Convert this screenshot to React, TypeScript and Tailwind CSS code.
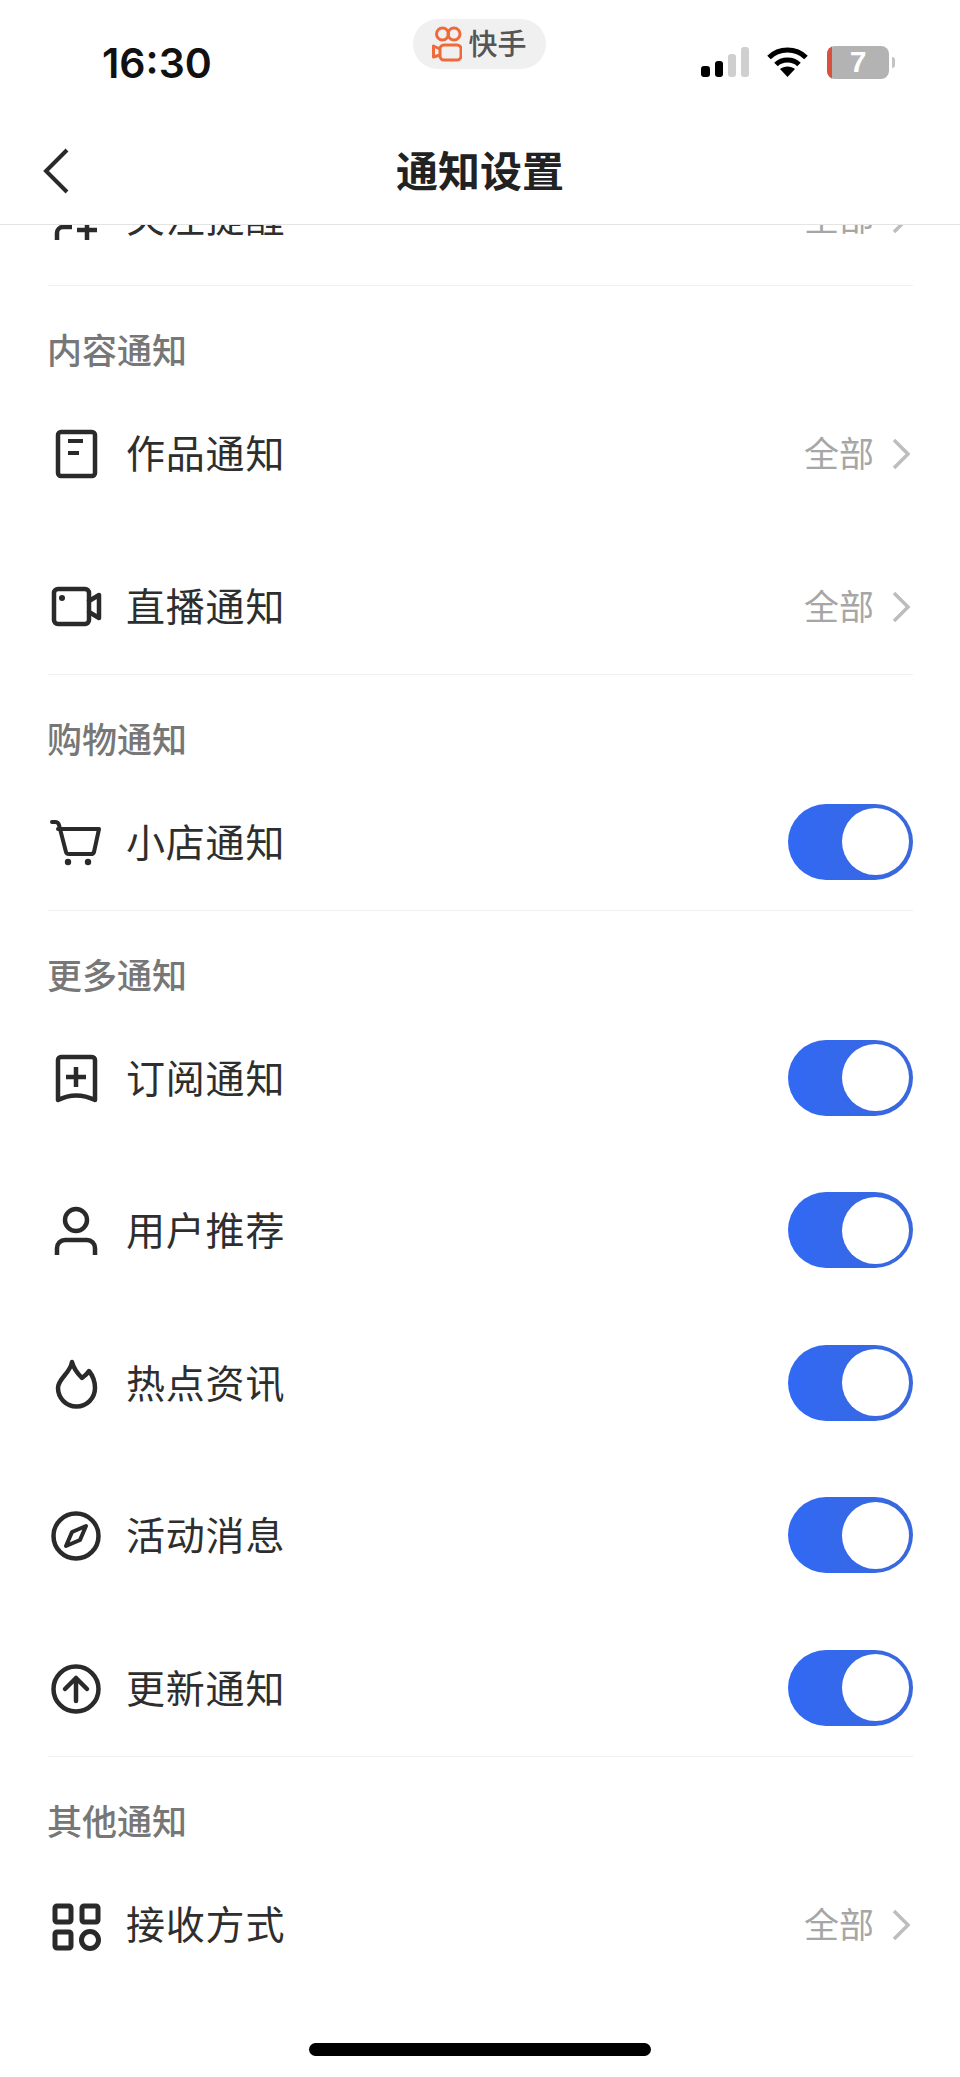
import type { ReactNode } from 'react'

const cjk = "[font-family:'Noto_Sans_CJK_SC','Liberation_Sans',sans-serif]"

function Icon({ children }: { children: ReactNode }) {
  return (
    <svg
      width="56"
      height="56"
      viewBox="0 0 56 56"
      fill="none"
      stroke="#2a2a2a"
      strokeWidth="4.5"
      strokeLinecap="round"
      strokeLinejoin="round"
      className="shrink-0"
    >
      {children}
    </svg>
  )
}

const icons = {
  follow: (
    <>
      <path d="M9 50V43a6 6 0 0 1 6-6h9" strokeLinecap="butt" />
      <path d="M29 40h20M39 30v20" strokeLinecap="butt" />
    </>
  ),
  doc: (
    <>
      <rect x="10" y="6" width="37" height="44" rx="3" />
      <path d="M20 15h15M20 27h11" strokeLinecap="butt" strokeWidth="4" />
    </>
  ),
  camera: (
    <>
      <rect x="6" y="10" width="35" height="35" rx="4" />
      <path d="M41 22l10-6v23l-10-6" />
      <circle cx="14" cy="19" r="3" fill="#2a2a2a" stroke="none" />
    </>
  ),
  cart: (
    <>
      <path d="M4 7h3c2 0 3.500 1 4 3l7 27c.4 1.500 1.500 2 3 2h22c1.500 0 2.500-.5 3-2l5-23H10" strokeWidth="4" />
      <circle cx="20" cy="47" r="3.200" fill="#2a2a2a" stroke="none" />
      <circle cx="40" cy="47" r="3.200" fill="#2a2a2a" stroke="none" />
    </>
  ),
  bookmark: (
    <>
      <path d="M10 9a3 3 0 0 1 3-3h31a3 3 0 0 1 3 3v40Q28 40 10 49z" />
      <path d="M18 26h20M28 16v20" strokeLinecap="butt" />
    </>
  ),
  person: (
    <>
      <circle cx="28" cy="17" r="11" />
      <path d="M9 52v-7a8 8 0 0 1 8-8h22a8 8 0 0 1 8 8v7" strokeLinecap="butt" />
    </>
  ),
  flame: <path d="M24 6c2 8 6 12 10 16 3-2 5-4 7-7 4 5 6 12 6 17a18.500 18.500 0 0 1-37 0c0-10 12-14 14-26z" />,
  compass: (
    <>
      <circle cx="28" cy="28" r="22.500" />
      <path d="M38 18l-6 14-14 6 6-14z" strokeWidth="4" />
    </>
  ),
  upload: (
    <>
      <circle cx="28" cy="28" r="22.500" />
      <path d="M28 17v23M17 28l11-11 11 11" />
    </>
  ),
  grid: (
    <>
      <rect x="7" y="9" width="16" height="16" rx="2" strokeWidth="5" />
      <rect x="34" y="9" width="16" height="16" rx="2" strokeWidth="5" />
      <rect x="7" y="35" width="16" height="16" rx="2" strokeWidth="5" />
      <circle cx="42" cy="43" r="8.500" strokeWidth="5" />
    </>
  ),
}

type Row = { icon: keyof typeof icons; label: string; toggle?: boolean }

const sections: { title: string; rows: Row[] }[] = [
  {
    title: '内容通知',
    rows: [
      { icon: 'doc', label: '作品通知' },
      { icon: 'camera', label: '直播通知' },
    ],
  },
  { title: '购物通知', rows: [{ icon: 'cart', label: '小店通知', toggle: true }] },
  {
    title: '更多通知',
    rows: [
      { icon: 'bookmark', label: '订阅通知', toggle: true },
      { icon: 'person', label: '用户推荐', toggle: true },
      { icon: 'flame', label: '热点资讯', toggle: true },
      { icon: 'compass', label: '活动消息', toggle: true },
      { icon: 'upload', label: '更新通知', toggle: true },
    ],
  },
  { title: '其他通知', rows: [{ icon: 'grid', label: '接收方式' }] },
]

function Toggle() {
  return (
    <div className="mb-[2px] flex h-[76px] w-[125px] items-center justify-end rounded-full bg-gradient-to-r from-[#3169f5] to-[#3a68dc] pr-[4px]">
      <div className="h-[67px] w-[67px] rounded-full bg-white" />
    </div>
  )
}

function AllLink() {
  return (
    <div className="flex items-center">
      <span className="pb-[5px] text-[35px] leading-none text-[#a6a6a6]">全部</span>
      <svg width="20" height="34" viewBox="0 0 20 34" fill="none" stroke="#bdbdbd" strokeWidth="3.5" className="ml-[17px] mr-[2px]">
        <path d="M3 3l14 14L3 31" />
      </svg>
    </div>
  )
}

function SettingRow({ row }: { row: Row }) {
  return (
    <div className="flex h-[134px] items-center justify-between">
      <div className="flex items-center gap-[22px]">
        <Icon>{icons[row.icon]}</Icon>
        <span className="pb-[5px] text-[39px] leading-none tracking-[0.8px] text-[#2e2e2e]">{row.label}</span>
      </div>
      {row.toggle ? <Toggle /> : <AllLink />}
    </div>
  )
}

function Section({ title, rows }: { title: string; rows: Row[] }) {
  return (
    <section className="border-t border-[#f0f0f0]">
      <h2 className="mb-[18px] mt-[43px] h-[40px] -translate-x-[1px] text-[35px] font-medium leading-[40px] text-[#777777]">{title}</h2>
      <div className="flex flex-col gap-[18.6px]">
        {rows.map((row) => (
          <SettingRow key={row.label} row={row} />
        ))}
      </div>
    </section>
  )
}

function StatusIcons() {
  return (
    <div className="flex items-center">
      <svg width="48" height="30" viewBox="0 0 48 30">
        <rect x="0" y="19" width="9" height="11" rx="3" fill="#000" />
        <rect x="14" y="14" width="8" height="16" rx="3" fill="#000" />
        <rect x="27" y="7" width="8" height="23" rx="3" fill="#cfcfcf" />
        <rect x="40" y="0" width="8" height="30" rx="3" fill="#cfcfcf" />
      </svg>
      <svg width="41" height="30" viewBox="0 0 41 30" className="ml-[18px]" fill="none" stroke="#000" strokeWidth="5">
        <path d="M2 10.500C12 0.500 29 0.500 39 10.500" />
        <path d="M9 17.500C15 11.500 26 11.500 32 17.500" />
        <path d="M13 22l7.500 8 7.500-8c-4-3.500-11-3.500-15 0z" fill="#000" stroke="none" />
      </svg>
      <div className="ml-[19px] flex h-[33px] w-[62px] items-center justify-center overflow-hidden rounded-[8px] bg-[#b3b3b3]">
        <div className="h-full w-[5px] shrink-0 bg-[#d9503f]" />
        <span className="flex-1 pr-[5px] text-center text-[30px] font-bold leading-none text-white [font-family:'Liberation_Sans',sans-serif]">7</span>
      </div>
      <div className="ml-[3px] h-[11px] w-[3px] rounded-r-full bg-[#c4c4c4]" />
    </div>
  )
}

function AppPill() {
  return (
    <div className="absolute left-[413px] top-[19px] flex h-[50px] w-[133px] items-center justify-center gap-[6px] rounded-full bg-[#f0f0f0]">
      <svg width="30" height="36" viewBox="0 0 30 36" fill="none" stroke="#ef6a3a" strokeWidth="3">
        <circle cx="10.500" cy="8" r="6" />
        <circle cx="22" cy="8" r="6" />
        <rect x="8" y="19" width="21" height="15" rx="4" />
        <path d="M8 23l-6.500-3v11L8 29" strokeLinejoin="round" />
      </svg>
      <span className="pb-[3px] text-[29px] font-medium leading-none text-[#555555]">快手</span>
    </div>
  )
}

export default function App() {
  return (
    <div className={`flex h-[2077px] w-[960px] flex-col overflow-hidden bg-white ${cjk}`}>
      <header className="relative z-10 h-[225px] shrink-0 border-b border-[#e4e4e4] bg-white">
        <div className="flex h-[124px] items-center justify-between pl-[102px] pr-[65px]">
          <span className="pt-[2px] text-[41px] font-semibold leading-none text-[#111111] [font-family:Inter,sans-serif]">16:30</span>
          <StatusIcons />
        </div>
        <AppPill />
        <div className="grid h-[94px] grid-cols-[1fr_auto_1fr] items-center px-[42px]">
          <svg width="28" height="46" viewBox="0 0 28 46" fill="none" stroke="#2a2a2a" strokeWidth="4">
            <path d="M25 2L4 23l21 21" />
          </svg>
          <h1 className="pb-[5px] text-[42px] font-bold leading-none text-[#222222]">通知设置</h1>
        </div>
      </header>

      <main className="ml-[48px] mr-[47px] flex-1">
        <div className="-mt-[74px]">
          <SettingRow row={{ icon: 'follow', label: '关注提醒' }} />
        </div>
        {sections.map((section) => (
          <Section key={section.title} title={section.title} rows={section.rows} />
        ))}
      </main>

      <div className="flex shrink-0 justify-center pb-[21px]">
        <div className="h-[13px] w-[342px] rounded-full bg-black" />
      </div>
    </div>
  )
}
